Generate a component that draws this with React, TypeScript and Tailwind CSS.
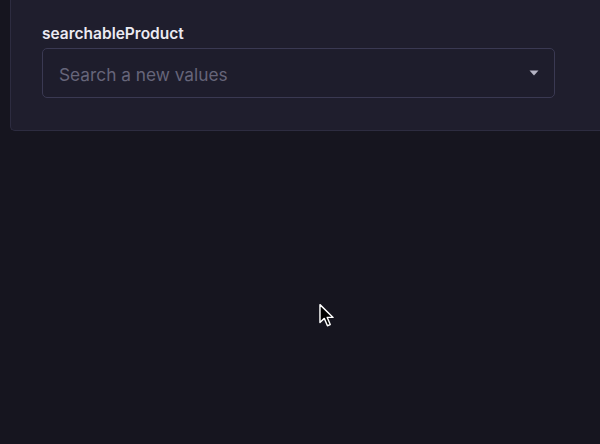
import React from 'react';

const Cursor: React.FC = () => (
    <svg width="18" height="26" viewBox="0 0 16 24" className="absolute left-[318px] top-[303px]">
        <path d="M1.5 1.5 L1.5 18 L5.5 14.2 L8.4 21 L11 19.9 L8.2 13.3 L13.6 13.3 Z" fill="#000" stroke="#fff" strokeWidth="1.3" strokeLinejoin="round" />
    </svg>
);

const App: React.FC = () => {
    return (
        <div className="relative w-[600px] h-[444px] overflow-hidden bg-[#16151f]" style={{ fontFamily: 'Inter, "Noto Sans", sans-serif' }}>
            <div className="ml-[10px] w-[620px] bg-[#1f1e2d] border-l border-b border-[#2d2c40] rounded-bl-[5px] pl-[31px] pt-[24px] pb-[32px]">
                <label className="block text-[15.5px] leading-[20px] font-semibold text-[#ebeaf2] mb-[4px]">searchableProduct</label>
                <div className="w-[513px] h-[50px] flex items-center justify-between border border-[#3a3952] rounded-[5px] bg-[#1e1d2c] pl-[16px] pr-[15px]">
                    <span className="text-[17.3px] leading-[24px] mt-[4px] text-[#66657a]">Search a new values</span>
                    <svg width="10" height="6" viewBox="0 0 10 6">
                        <path d="M0.5 0.5 L9.5 0.5 L5 5.5 Z" fill="#b5b4c4" />
                    </svg>
                </div>
            </div>
            <Cursor />
        </div>
    );
};

export default App;
